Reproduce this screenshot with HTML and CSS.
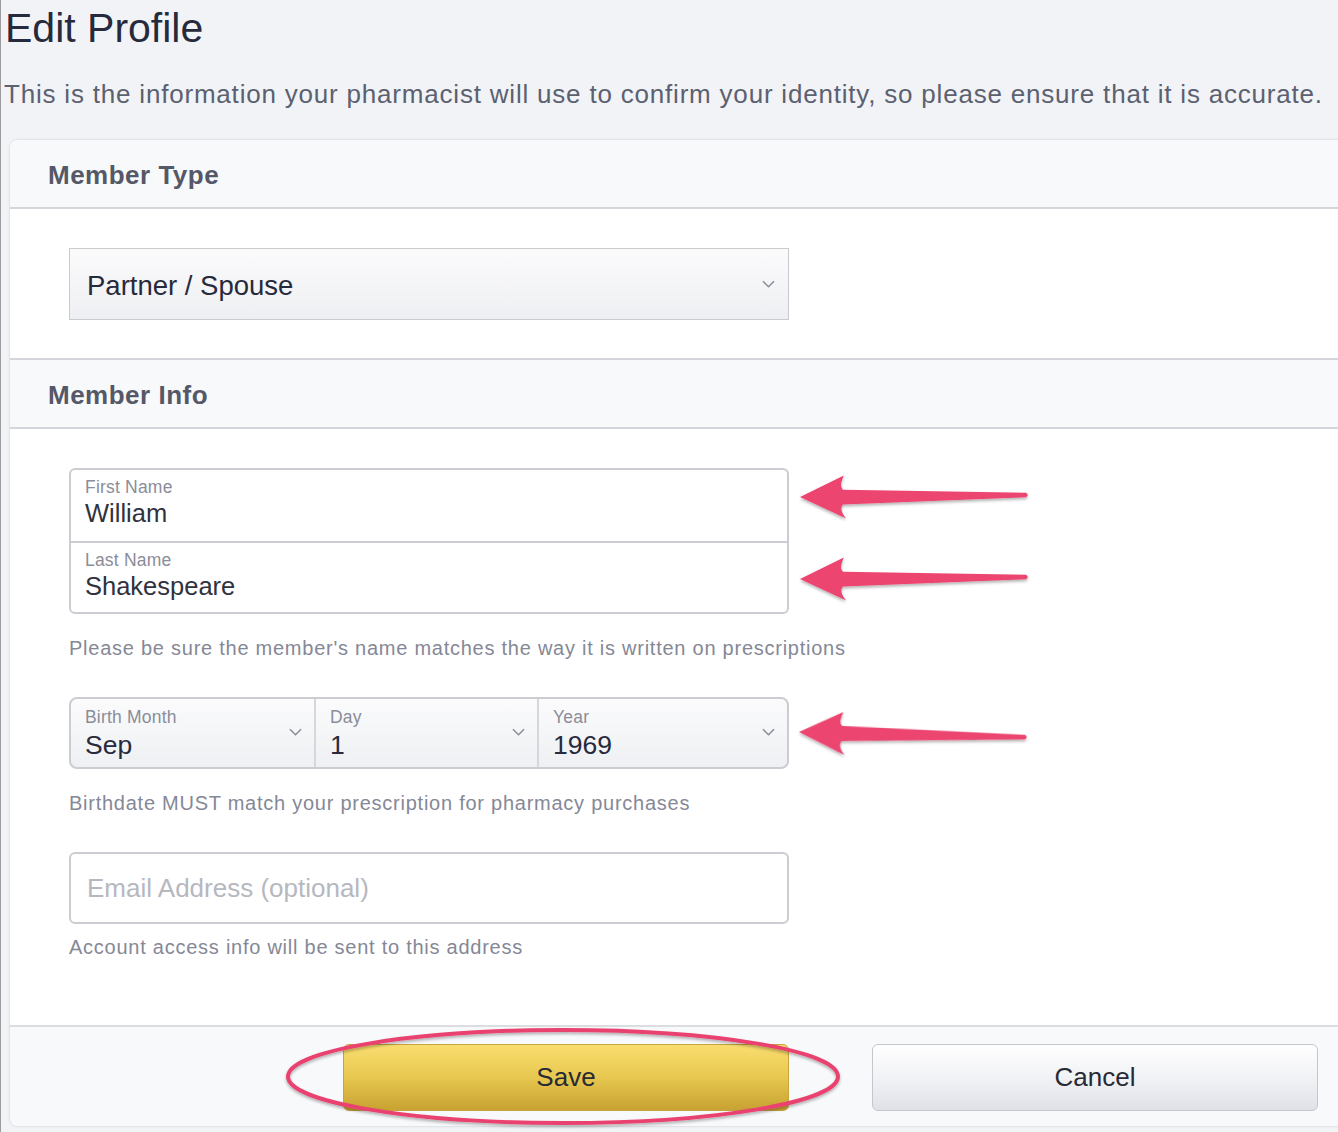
FILE: index.html
```html
<!DOCTYPE html>
<html lang="en">
<head>
<meta charset="utf-8">
<title>Edit Profile</title>
<link rel="stylesheet" href="styles.css">
</head>
<body>
<div class="page">
  <h1 class="title">Edit Profile</h1>
  <p class="subtitle">This is the information your pharmacist will use to confirm your identity, so please ensure that it is accurate.</p>

  <div class="card">
    <div class="section-head">Member Type</div>
    <div class="section-body type-body">
      <div class="select big">
        <span class="select-value">Partner / Spouse</span>
        <svg class="chev" viewBox="0 0 14 8"><path d="M1 1 L7 7 L13 1"/></svg>
      </div>
    </div>

    <div class="section-head">Member Info</div>
    <div class="section-body info-body">
      <div class="group names">
        <div class="field">
          <span class="label">First Name</span>
          <span class="value">William</span>
        </div>
        <div class="field">
          <span class="label">Last Name</span>
          <span class="value">Shakespeare</span>
        </div>
      </div>
      <p class="hint hint-names">Please be sure the member's name matches the way it is written on prescriptions</p>

      <div class="group dates">
        <div class="field dfield month">
          <span class="label">Birth Month</span>
          <span class="value">Sep</span>
          <svg class="chev" viewBox="0 0 14 8"><path d="M1 1 L7 7 L13 1"/></svg>
        </div>
        <div class="field dfield day">
          <span class="label">Day</span>
          <span class="value">1</span>
          <svg class="chev" viewBox="0 0 14 8"><path d="M1 1 L7 7 L13 1"/></svg>
        </div>
        <div class="field dfield year">
          <span class="label">Year</span>
          <span class="value">1969</span>
          <svg class="chev" viewBox="0 0 14 8"><path d="M1 1 L7 7 L13 1"/></svg>
        </div>
      </div>
      <p class="hint hint-dates">Birthdate MUST match your prescription for pharmacy purchases</p>

      <div class="group email">
        <span class="placeholder">Email Address (optional)</span>
      </div>
      <p class="hint hint-email">Account access info will be sent to this address</p>
    </div>

    <div class="footer">
      <button class="btn save">Save</button>
      <button class="btn cancel">Cancel</button>
    </div>
  </div>

  <svg class="annotations" viewBox="0 0 1338 1132" width="1338" height="1132">
    <defs>
      <filter id="shadow" x="-10%" y="-50%" width="120%" height="200%">
        <feDropShadow dx="0" dy="2" stdDeviation="1.5" flood-color="#000" flood-opacity="0.3"/>
      </filter>
      <path id="arrow" d="M0,0 L44,-21 C41,-14 40,-10 43,-7 L226,-2.2 Q229.5,0 226,2.2 L43,8 C40,11 41,16 46,22 Z"/>
    </defs>
    <g fill="#ec4470" filter="url(#shadow)">
      <use href="#arrow" transform="translate(800,497) rotate(-0.5)"/>
      <use href="#arrow" transform="translate(800,579) rotate(-0.5)"/>
      <use href="#arrow" transform="translate(799,732) rotate(1.3)"/>
    </g>
    <ellipse cx="563" cy="1076.5" rx="275" ry="46.5" fill="none" stroke="#e94370" stroke-width="4" filter="url(#shadow)"/>
  </svg>
</div>
</body>
</html>
```

FILE: styles.css
```css
html, body {
  margin: 0;
  padding: 0;
}
body {
  background: #f2f3f6;
  font-family: "Liberation Sans", Arial, sans-serif;
  overflow: hidden;
}
.page {
  position: relative;
  width: 1338px;
  height: 1132px;
  box-sizing: border-box;
  border-left: 1px solid #9c9c9c;
  overflow: hidden;
}
.title {
  margin: 0;
  padding: 4px 0 0 4px;
  font-size: 41px;
  line-height: 48px;
  font-weight: normal;
  color: #272a3c;
}
.subtitle {
  margin: 27px 0 0 3px;
  font-size: 26px;
  line-height: 30px;
  color: #5b6170;
  white-space: nowrap;
  letter-spacing: 0.8px;
}
.card {
  margin: 30px -12px 0 8px;
  background: #fff;
  border: 1px solid #e3e4e8;
  border-radius: 9px 0 0 9px;
  box-shadow: 0 0 3px rgba(0,0,0,0.05);
  overflow: hidden;
}
.section-head {
  height: 67px;
  box-sizing: border-box;
  padding-top: 3px;
  display: flex;
  align-items: center;
  padding-left: 38px;
  background: #f8f9fb;
  border-bottom: 2px solid #d5d6db;
  font-size: 26px;
  font-weight: bold;
  color: #555867;
  letter-spacing: 0.5px;
}
.section-head { height: 69px; }
.section-body {
  padding-left: 59px;
}
.type-body {
  padding-top: 39px;
  padding-bottom: 38px;
  border-bottom: 2px solid #d5d6db;
}
.select {
  width: 720px;
  height: 72px;
  box-sizing: border-box;
  border: 1px solid #c9cbd1;
  background: linear-gradient(#fbfbfc, #eeeff2);
  display: flex;
  align-items: center;
  padding: 3px 13px 0 17px;
  justify-content: space-between;
}
.select .chev { margin-top: -3px; }
.select-value {
  font-size: 27.5px;
  color: #272a3c;
}
.chev {
  width: 13px;
  height: 8px;
  fill: none;
  stroke: #8b8e99;
  stroke-width: 1.6;
}
.info-body {
  padding-top: 39px;
  padding-bottom: 66px;
}
.group {
  width: 720px;
  box-sizing: border-box;
  border: 2px solid #cbcdd2;
  border-radius: 6px;
  overflow: hidden;
}
.names .field {
  height: 71px;
  box-sizing: border-box;
  padding: 7px 0 0 14px;
  display: flex;
  flex-direction: column;
}
.names .field + .field {
  border-top: 2px solid #cbcdd2;
  height: 71px;
}
.label {
  font-size: 17.5px;
  line-height: 20px;
  color: #8a8d99;
  letter-spacing: 0.2px;
}
.value {
  font-size: 25.5px;
  line-height: 32px;
  color: #30323d;
}
.hint {
  margin: 0;
  font-size: 20px;
  line-height: 24px;
  color: #858896;
  letter-spacing: 0.75px;
  white-space: nowrap;
}
.hint-names { margin-top: 22px; }
.dates {
  margin-top: 37px;
  height: 72px;
  display: flex;
  border-radius: 8px;
  background: linear-gradient(#fbfbfc, #eef0f3);
}
.dfield {
  position: relative;
  display: flex;
  flex-direction: column;
  box-sizing: border-box;
  padding: 8px 0 0 14px;
}
.dfield + .dfield {
  border-left: 2px solid #d5d7dc;
}
.month { width: 243px; }
.day { width: 223px; }
.year { flex: 1; }
.dfield .value {
  color: #272a3c;
  font-size: 26.5px;
  margin-top: 2px;
}
.dfield .chev {
  position: absolute;
  right: 12px;
  top: 29px;
}
.hint-dates { margin-top: 22px; }
.email {
  margin-top: 37px;
  height: 72px;
  display: flex;
  align-items: center;
  padding-left: 16px;
}
.placeholder {
  font-size: 26px;
  color: #b6b8c0;
}
.hint-email { margin-top: 11px; }
.footer {
  background: #f8f9fb;
  border-top: 2px solid #dcdde1;
  height: 101px;
  box-sizing: border-box;
  display: flex;
  justify-content: flex-end;
  align-items: flex-start;
  gap: 83px;
  padding: 17px 31px 0 0;
}
.btn {
  width: 446px;
  height: 67px;
  font-family: "Liberation Sans", Arial, sans-serif;
  font-size: 26px;
  color: #272a35;
  border-radius: 6px;
  cursor: pointer;
}
.save {
  background: linear-gradient(#f9dd6f, #e7c74f 50%, #c8a232);
  border: 1px solid #c8a53c;
}
.cancel {
  background: linear-gradient(#ffffff, #f1f2f5 50%, #e0e2e8);
  border: 1px solid #c3c6cd;
}
.annotations {
  position: absolute;
  left: -1px;
  top: 0;
  pointer-events: none;
}
```
